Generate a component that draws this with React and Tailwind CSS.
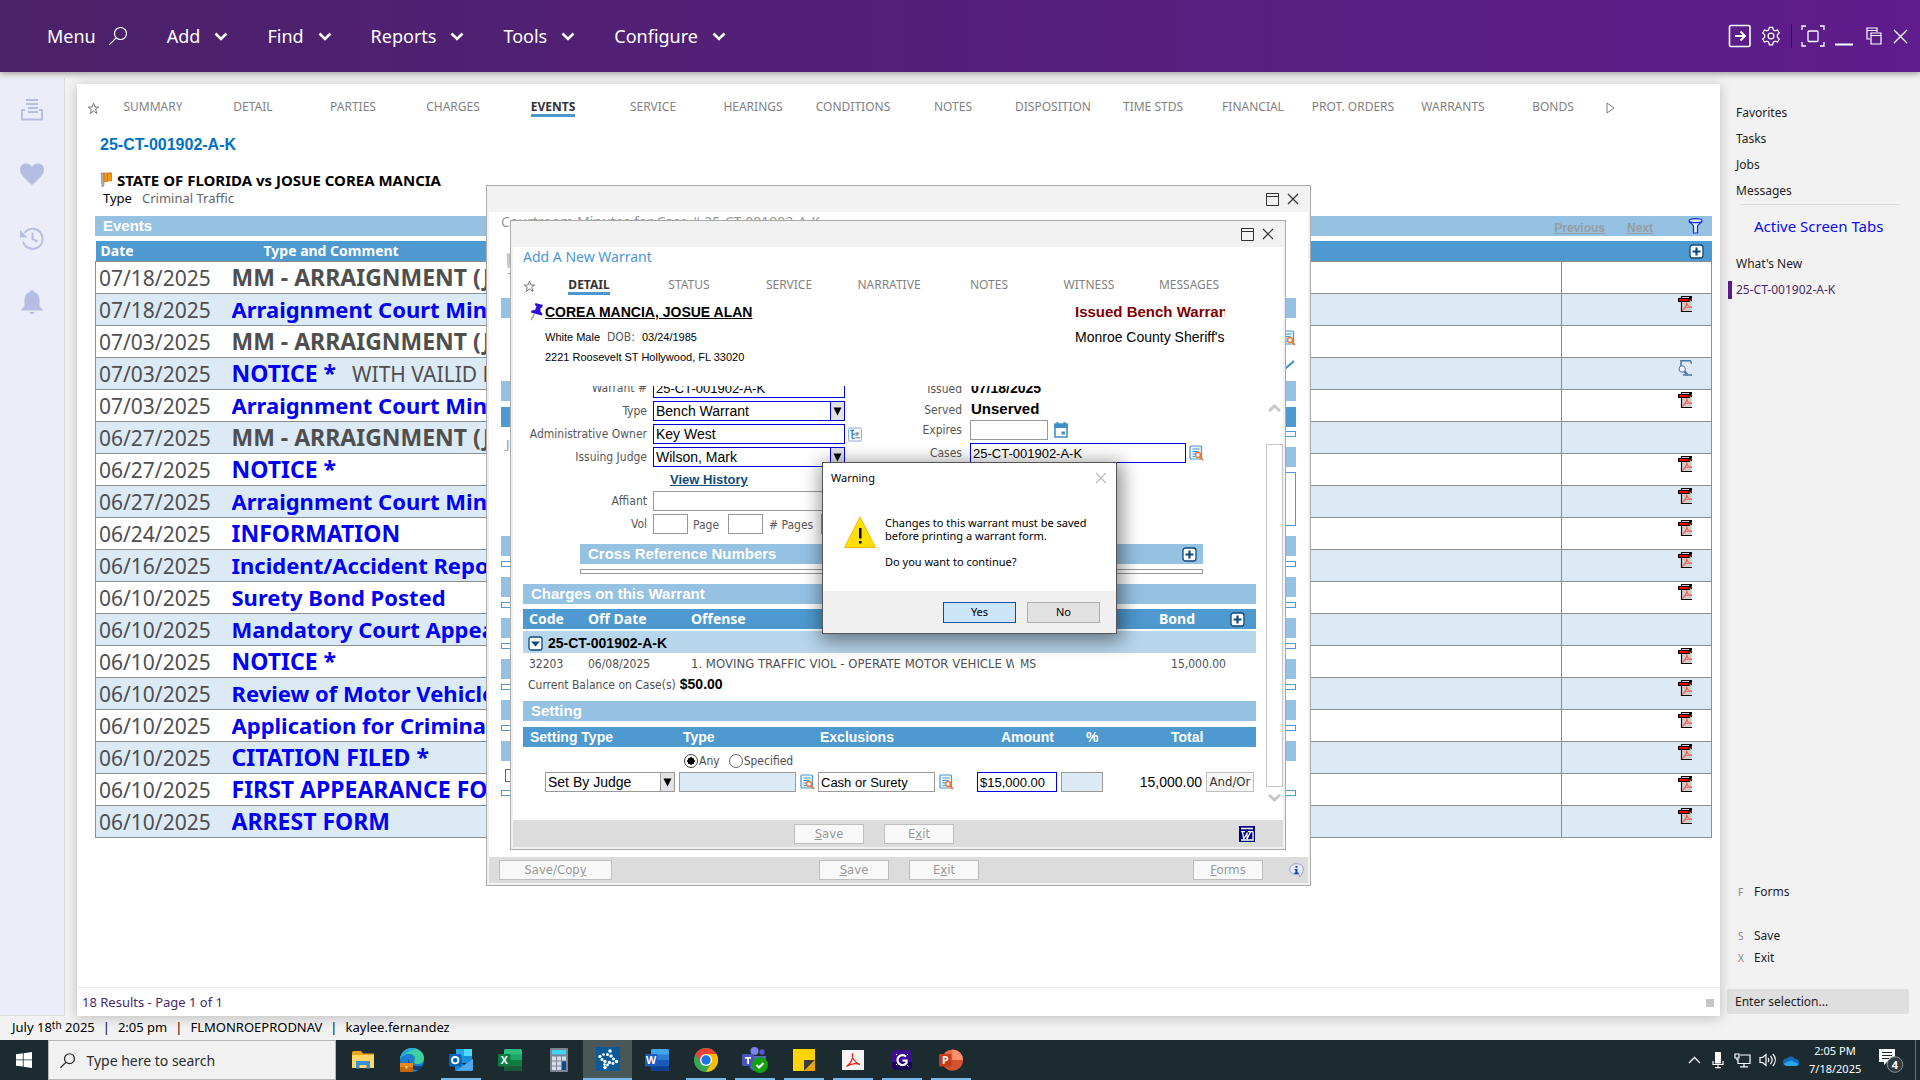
import React from "react";

const arial = "font-['Liberation_Sans',Arial,sans-serif]";
const tahoma = "font-['DejaVu_Sans_Condensed',Tahoma,sans-serif]";

/* ---------- shared icons ---------- */
const Chevron = () => (
  <svg width="14" height="9" viewBox="0 0 14 9" fill="none" stroke="#fff" strokeWidth="2.6">
    <path d="M1.5 1.5 7 7l5.500-5.500" />
  </svg>
);
const Star = ({ size = 13 }) => (
  <svg width={size} height={size} viewBox="0 0 13 13" fill="none" stroke="#777" strokeWidth="1">
    <path d="M6.500 1.200 7.900 5h3.900L8.700 7.400 9.900 11.500 6.500 9 3.100 11.500 4.300 7.400 1.200 5h3.900z" />
  </svg>
);
const Flag = () => (
  <svg width="12" height="16" viewBox="0 0 12 16">
    <path d="M1 1h3v12.500L2 15z" fill="#b5b5b5" stroke="#777" strokeWidth=".6" />
    <path d="M4 1c3 .8 4.500-.6 7.500 0v8c-3-.8-4.500 1.200-7.500.5z" fill="#f39a16" stroke="#b8690a" strokeWidth=".7" />
    <path d="M7.500 1.200v8" stroke="#c97a10" />
  </svg>
);
const PlusIcon = () => (
  <svg width="15" height="15" viewBox="0 0 15 15">
    <rect x="1" y="1" width="13" height="13" rx="2.500" fill="#fff" stroke="#0e4a7a" strokeWidth="1.300" />
    <path d="M7.500 3.500v8M3.500 7.500h8" stroke="#0e4a7a" strokeWidth="2.200" />
  </svg>
);
const LookupIcon = () => (
  <svg width="15" height="16" viewBox="0 0 15 16" fill="none">
    <rect x="1" y="1" width="11.500" height="13" rx="1" fill="#eaf4fb" stroke="#4c97cf" strokeWidth="1.200" />
    <path d="M3.500 4h7M3.500 6.500h6M3.500 9h3M3.500 11.500h3" stroke="#4c97cf" />
    <circle cx="9" cy="10" r="2.400" fill="#fff" stroke="#ee7d3b" strokeWidth="1.500" />
    <path d="m10.800 11.800 3.200 3.200" stroke="#ee7d3b" strokeWidth="1.800" />
  </svg>
);
const PdfIcon = () => (
  <svg width="14" height="16" viewBox="0 0 12 16" preserveAspectRatio="none">
    <path d="M3 .5h9V16H3z" fill="#cfcfcf" />
    <path d="M12 .5H3v15h9" fill="none" stroke="#000" />
    <path d="M9.500.5h2.500v5l-2.500-2z" fill="#000" />
    <path d="M11 2h1v2h-1z" fill="#e00" />
    <rect x=".5" y="2.500" width="9" height="3" fill="#f00" stroke="#000" />
    <path d="M3.500 14.500C6 12 7.500 9 7.500 6.500c0 3 2 4.500 4.500 5M5 12.500c2-1.200 4-1.600 7-1.500" fill="none" stroke="#f4574a" strokeWidth=".9" />
  </svg>
);
const PreviewIcon = () => (
  <svg width="14" height="16" viewBox="0 0 14 16" fill="none">
    <path d="M3 .5h9l2 3V15H3z" fill="#dfe7f3" />
    <path d="M3 7V.8h9.200L14 4M5 15h9" stroke="#4a76ad" strokeWidth="1.500" />
    <circle cx="4.200" cy="9" r="3.200" fill="#eef4fb" stroke="#4a76ad" />
    <path d="m6.300 11.300 3 3.500" stroke="#4a76ad" strokeWidth="2.400" />
  </svg>
);
const MaximizeIcon = () => (
  <svg width="13" height="13" viewBox="0 0 13 13" fill="none" stroke="#333">
    <path d="M.5.5h12v12H.5zM.5 3.500h12" />
  </svg>
);
const CloseIcon = ({ color = "#333" }) => (
  <svg width="12" height="12" viewBox="0 0 12 12" fill="none" stroke={color} strokeWidth="1.200">
    <path d="m1 1 10 10M11 1 1 11" />
  </svg>
);

/* ---------- top bar ---------- */
function TopBar() {
  return (
    <header className="relative z-10 flex h-[72px] shrink-0 items-center bg-linear-to-r from-[#4b2169] to-[#5e1c8c] pr-[12px] pl-[47px] text-white shadow-[0_2px_6px_rgba(0,0,0,0.35)]">
      <nav className="flex items-center gap-[39px] text-[18px]">
        <button className="flex items-center gap-[12px]">
          Menu
          <svg width="20" height="20" viewBox="0 0 20 20" fill="none" stroke="#fff" strokeWidth="1.200">
            <circle cx="12.500" cy="7.500" r="6" />
            <path d="m8.200 11.800-7 7" />
          </svg>
        </button>
        {["Add", "Find", "Reports", "Tools", "Configure"].map((t) => (
          <button key={t} className="flex items-center gap-[14px]">
            {t}
            <Chevron />
          </button>
        ))}
      </nav>
      <div className="ml-auto flex items-center">
        <button aria-label="Go" className="mr-[9px]">
          <svg width="24" height="24" viewBox="0 0 24 24" fill="none" stroke="#fff" strokeWidth="1.600">
            <rect x="1.500" y="1.500" width="20.500" height="21" rx="1.500" />
            <path d="M7 12h9.500M12.500 7.500 17 12l-4.500 4.500" strokeWidth="1.800" />
          </svg>
        </button>
        <button aria-label="Settings" className="mr-[10px]">
          <svg width="20" height="20" viewBox="0 0 24 24" fill="none" stroke="#fff" strokeWidth="1.500">
            <circle cx="12" cy="12" r="3.500" />
            <path d="M10 1.500h4l.7 3 2.200 1.200 3-.9 2 3.500-2.300 2.200v3l2.300 2.200-2 3.500-3-.9-2.200 1.200-.7 3h-4l-.7-3-2.200-1.200-3 .9-2-3.500 2.300-2.200v-3L2.100 8.300l2-3.500 3 .9 2.200-1.200z" />
          </svg>
        </button>
        <span className="mr-[9px] h-[24px] w-px bg-[#33104f]" />
        <button aria-label="Full screen" className="mr-[10px]">
          <svg width="24" height="22" viewBox="0 0 24 22" fill="none" stroke="#fff" strokeWidth="1.300">
            <path d="M5 1H1v4M19 1h4v4M5 21H1v-4M19 21h4v-4" />
            <rect x="7" y="6" width="10" height="10.500" rx="1" />
          </svg>
        </button>
        <button aria-label="Minimize" className="mr-[13px]">
          <svg width="18" height="22" viewBox="0 0 18 22">
            <path d="M0 18.500h18v2H0z" fill="#fff" />
          </svg>
        </button>
        <button aria-label="Restore" className="mr-[11px]">
          <svg width="16" height="18" viewBox="0 0 16 18" fill="none" stroke="#fff" strokeWidth="1.200">
            <path d="M4 12H1V1h10v4M1 3.500h10" />
            <path d="M5 6h10v11H5zM5 8.500h10" />
          </svg>
        </button>
        <button aria-label="Close">
          <svg width="15" height="15" viewBox="0 0 15 15" fill="none" stroke="#fff" strokeWidth="1.300">
            <path d="m1 1 13 13M14 1 1 14" />
          </svg>
        </button>
      </div>
    </header>
  );
}

/* ---------- left rail ---------- */
function SideRail() {
  return (
    <aside className="mt-[6px] flex w-[65px] shrink-0 flex-col items-center gap-[40px] border-r border-b border-[#dcdcdc] bg-[#ebeef8] pt-[20px]">
      <button aria-label="Queue">
        <svg width="24" height="24" viewBox="0 0 24 24" fill="none" stroke="#b6bde4" strokeWidth="2">
          <path d="M6 2h12M6 6h12M8 10h10M8 14h10M5 12H2v9.500h20V12h-3" />
        </svg>
      </button>
      <button aria-label="Favorites">
        <svg width="24" height="24" viewBox="0 0 24 24" fill="#b6bde4">
          <path d="M12 23C6 17.500 0 13 0 7.500 0 4 2.700 1.500 6 1.500c2.500 0 4.800 1.300 6 3.500 1.200-2.200 3.500-3.500 6-3.500 3.300 0 6 2.500 6 6C24 13 18 17.500 12 23z" />
        </svg>
      </button>
      <button aria-label="History">
        <svg width="26" height="24" viewBox="0 0 26 24" fill="none" stroke="#b6bde4" strokeWidth="2">
          <path d="M5.500 7A10 10 0 1 1 4 15.500" />
          <path d="M1 4v7.500h7.500z" fill="#b6bde4" stroke="none" />
          <path d="M13.500 6.500V13l5 2.500" />
        </svg>
      </button>
      <button aria-label="Notifications">
        <svg width="22" height="24" viewBox="0 0 22 24" fill="#b6bde4">
          <path d="M11 0a2 2 0 0 1 2 2c4 1 5.500 4 5.500 8v6.500L22 19.500v1H0v-1l3.500-3V10c0-4 1.500-7 5.500-8a2 2 0 0 1 2-2zM8.500 22h5a2.500 2 0 0 1-5 0z" />
        </svg>
      </button>
    </aside>
  );
}

/* ---------- events page ---------- */
const TABS = ["SUMMARY", "DETAIL", "PARTIES", "CHARGES", "EVENTS", "SERVICE", "HEARINGS", "CONDITIONS", "NOTES", "DISPOSITION", "TIME STDS", "FINANCIAL", "PROT. ORDERS", "WARRANTS", "BONDS"];

function Tabs({ items, active }) {
  return items.map((t) => (
    <span key={t} className="flex w-[100px] justify-center">
      <button
        className={
          t === active
            ? "border-b-[3px] border-[#4c97cf] leading-[14px] font-bold text-[#333]"
            : "border-b-[3px] border-transparent leading-[14px] text-[#828282]"
        }
      >
        {t}
      </button>
    </span>
  ));
}

const EVENTS = [
  ["07/18/2025", "MM - ARRAIGNMENT (J", 0, ""],
  ["07/18/2025", "Arraignment Court Min", 1, "pdf"],
  ["07/03/2025", "MM - ARRAIGNMENT (J", 0, ""],
  ["07/03/2025", "NOTICE *", 1, "view", "WITH VAILID D"],
  ["07/03/2025", "Arraignment Court Min", 1, "pdf"],
  ["06/27/2025", "MM - ARRAIGNMENT (J", 0, ""],
  ["06/27/2025", "NOTICE *", 1, "pdf"],
  ["06/27/2025", "Arraignment Court Min", 1, "pdf"],
  ["06/24/2025", "INFORMATION", 1, "pdf"],
  ["06/16/2025", "Incident/Accident Repo", 1, "pdf"],
  ["06/10/2025", "Surety Bond Posted", 1, "pdf"],
  ["06/10/2025", "Mandatory Court Appea", 1, ""],
  ["06/10/2025", "NOTICE *", 1, "pdf"],
  ["06/10/2025", "Review of Motor Vehicle", 1, "pdf"],
  ["06/10/2025", "Application for Crimina", 1, "pdf"],
  ["06/10/2025", "CITATION FILED *", 1, "pdf"],
  ["06/10/2025", "FIRST APPEARANCE FO", 1, "pdf"],
  ["06/10/2025", "ARREST FORM", 1, "pdf"],
];

function EventsTable() {
  return (
    <table className="mt-[5px] w-full table-fixed border-collapse">
      <colgroup>
        <col className="w-[136px]" />
        <col />
        <col className="w-[150px]" />
      </colgroup>
      <thead>
        <tr className="h-[20px] bg-[#4e99cf] text-left text-[14px] leading-[20px] text-white">
          <th className="p-0 pl-[5px]">Date</th>
          <th className="p-0 pl-[32px]">Type and Comment</th>
          <th className="p-0 pr-[8px]">
            <button aria-label="Add event" className="ml-auto block">
              <PlusIcon />
            </button>
          </th>
        </tr>
      </thead>
      <tbody>
        {EVENTS.map(([date, name, link, icon, note], i) => {
          const size = name === name.toUpperCase() ? "text-[23px]" : "text-[22px]";
          return (
            <tr key={i} className="h-[32px] border border-[#8b8e90] text-[21px] leading-[28px] text-[#4f4f4f] odd:bg-white even:bg-[#dceaf6]">
              <td className="p-0 pl-[3px]">{date}</td>
              <td className="overflow-hidden p-0 whitespace-nowrap">
                {link ? (
                  <a href="#event" className={"font-bold text-[#0000f5] " + size}>{name}</a>
                ) : (
                  <span className={"font-bold " + size}>{name}</span>
                )}
                {note && <span className="ml-4">{note}</span>}
              </td>
              <td className="border-l border-[#8b8e90] p-0 pt-[2px] pr-[19px] align-top">
                {icon && (
                  <button aria-label="Open document" className="ml-auto block">
                    {icon === "pdf" ? <PdfIcon /> : <PreviewIcon />}
                  </button>
                )}
              </td>
            </tr>
          );
        })}
      </tbody>
    </table>
  );
}

/* ---------- window parts ---------- */
function TitleBar() {
  return (
    <div className="flex h-[26px] shrink-0 items-center justify-end gap-2 bg-[#f2f2f2] pr-[9px]">
      <button aria-label="Maximize"><MaximizeIcon /></button>
      <button aria-label="Close window"><CloseIcon /></button>
    </div>
  );
}

function GreyButton({ children, width = "w-[70px]" }) {
  return (
    <button className={"h-[20px] border border-[#bdbdbd] bg-[#f8f8f8] text-[13px] leading-[18px] text-[#999] " + tahoma + " " + width}>
      {children}
    </button>
  );
}

function SectionBar({ children, right }) {
  return (
    <div className={"flex h-[20px] items-center bg-[#95c1e3] pr-[6px] pl-2 text-[15px] leading-[20px] font-bold text-white " + arial}>
      <h2>{children}</h2>
      {right}
    </div>
  );
}

const label = "w-[124px] shrink-0 text-right text-[12px] leading-[21px] whitespace-nowrap text-[#585858]";
const blueBox = "block h-[20px] min-w-0 rounded-none border border-[#0000e0] bg-white px-[2px] leading-[18px] text-black " + arial;
const greyBox = "block h-[20px] min-w-0 rounded-none border border-[#999] bg-white px-[2px] leading-[18px] text-black " + arial;

function Dropdown({ id, name, value, box, width, arrow }) {
  return (
    <div className={"relative h-[20px] " + width}>
      <select id={id} aria-label={name} className={"w-full appearance-none text-[14px] " + box}>
        <option>{value}</option>
      </select>
      <span className={"pointer-events-none absolute inset-y-0 right-0 flex w-[15px] items-center justify-center border bg-[#e2e3e6] " + arrow}>
        <svg width="9" height="9" viewBox="0 0 9 9"><path d="M.5.500h8L4.500 8.500z" /></svg>
      </span>
    </div>
  );
}

function WarrantForm() {
  return (
    <div className="flex text-[12px] text-[#585858]">
      <div className="w-[322px] shrink-0">
        <div className="flex h-[23px] gap-[6px]">
          <label htmlFor="wn" className={label}>Warrant #</label>
          <input id="wn" defaultValue="25-CT-001902-A-K" className={"flex-1 text-[13px] " + blueBox} />
        </div>
        <div className="flex h-[23px] gap-[6px]">
          <label htmlFor="wt" className={label}>Type</label>
          <Dropdown id="wt" value="Bench Warrant" box={blueBox} width="flex-1" arrow="border-[#0000e0]" />
        </div>
        <div className="flex h-[23px] gap-[6px]">
          <label htmlFor="ao" className={label}>Administrative Owner</label>
          <input id="ao" defaultValue="Key West" className={"flex-1 text-[14px] " + blueBox} />
        </div>
        <div className="flex h-[23px] gap-[6px]">
          <label htmlFor="ij" className={label}>Issuing Judge</label>
          <Dropdown id="ij" value="Wilson, Mark" box={blueBox} width="flex-1" arrow="border-[#0000e0]" />
        </div>
        <a href="#history" className={"ml-[147px] block h-[21px] text-[13px] leading-[19px] font-bold text-[#124a77] underline " + arial}>View History</a>
        <div className="flex h-[23px] gap-[6px]">
          <label htmlFor="af" className={label}>Affiant</label>
          <input id="af" className={"flex-1 text-[14px] " + greyBox} />
        </div>
        <div className="flex h-[20px] leading-[22px]">
          <label htmlFor="vol" className={label}>Vol</label>
          <input id="vol" className={"ml-[6px] w-[35px] " + greyBox} />
          <label htmlFor="pg" className="mx-[5px] w-[30px]">Page</label>
          <input id="pg" className={"w-[35px] " + greyBox} />
          <label htmlFor="pgs" className="mx-[6px] w-[46px] shrink-0 whitespace-nowrap"># Pages</label>
          <input id="pgs" className={"w-[24px] shrink-0 " + greyBox} />
        </div>
      </div>
      <button aria-label="Browse owners" className="mt-[49px] ml-[3px] h-[15px] self-start">
        <svg width="14" height="15" viewBox="0 0 15 15" fill="none">
          <rect x=".5" y=".5" width="14" height="14" rx="1.500" fill="#f4f7fb" stroke="#8ca6cf" />
          <path d="M2.500 3h4M4.500 3v8.500h3M4.500 7h3" stroke="#1d7fd6" strokeWidth="1.300" />
          <path d="M8 6h4M8 8h3M8 11h5" stroke="#777" strokeWidth="1.300" />
        </svg>
      </button>
      <div className="ml-[24px]">
        <div className="flex h-[21px] items-center gap-[9px]">
          <span className="w-[76px] text-right">Issued</span>
          <b className={"text-[14px] text-black " + arial}>07/18/2025</b>
        </div>
        <div className="flex h-[21px] items-center gap-[9px]">
          <span className="w-[76px] text-right">Served</span>
          <b className={"text-[15px] text-black " + arial}>Unserved</b>
        </div>
        <div className="flex h-[23px] gap-2 leading-[21px]">
          <label htmlFor="ex" className="w-[76px] text-right">Expires</label>
          <input id="ex" className={"w-[78px] " + greyBox} />
          <button aria-label="Pick date" className="-ml-[2px] h-[20px]">
            <svg width="14" height="16" viewBox="0 0 14 16">
              <path d="M1 2h12v13H1z" fill="#fff" stroke="#4190c9" strokeWidth="1.600" />
              <path d="M0 2h14v4H0zM2.500 0h2v3h-2zM9.500 0h2v3h-2zM7.500 9.500h3.500v3H7.500z" fill="#4190c9" />
            </svg>
          </button>
        </div>
        <div className="flex h-[23px] gap-2 leading-[21px]">
          <label htmlFor="cs" className="w-[76px] text-right">Cases</label>
          <input id="cs" defaultValue="25-CT-001902-A-K" className={"w-[216px] text-[13px] " + blueBox} />
          <button aria-label="Look up case" className="-ml-[5px] h-[20px]"><LookupIcon /></button>
        </div>
      </div>
    </div>
  );
}

function ChargesTable() {
  return (
    <table className="mt-[5px] w-full table-fixed border-collapse text-[12px] text-[#4f4f4f]">
      <colgroup>
        <col className="w-[65px]" />
        <col className="w-[103px]" />
        <col className="w-[323px]" />
        <col className="w-[54px]" />
        <col />
        <col className="w-[30px]" />
      </colgroup>
      <thead>
        <tr className="h-[20px] bg-[#4e99cf] text-left font-['Noto_Sans',sans-serif] text-[14px] leading-[20px] text-white">
          <th className="p-0 pl-[6px]">Code</th>
          <th className="p-0">Off Date</th>
          <th className="p-0">Offense</th>
          <th className="p-0" />
          <th className="p-0 pr-[31px] text-right">Bond</th>
          <th className="p-0 pl-[4px]">
            <button aria-label="Add charge" className="block"><PlusIcon /></button>
          </th>
        </tr>
      </thead>
      <tbody>
        <tr>
          <td colSpan={6} className="h-[23px] border-t-2 border-white bg-[#b7d5eb] p-0">
            <div className={"flex items-center gap-[5px] pt-[2px] pl-[5px] text-[14px] leading-[19px] font-bold text-black " + arial}>
              <button aria-label="Collapse">
                <svg width="15" height="15" viewBox="0 0 15 15">
                  <rect x="1" y="1" width="13" height="13" rx="2" fill="#fff" stroke="#0e4a7a" strokeWidth="1.300" />
                  <path d="M3 5.500h9L7.500 10.500z" fill="#0e4a7a" />
                </svg>
              </button>
              25-CT-001902-A-K
            </div>
          </td>
        </tr>
        <tr className="h-[22px]">
          <td className="p-0 pl-[6px]">32203</td>
          <td className="p-0">06/08/2025</td>
          <td className="overflow-hidden p-0 text-[13px] leading-[20px] whitespace-nowrap">1. MOVING TRAFFIC VIOL - OPERATE MOTOR VEHICLE W</td>
          <td className="p-0 pl-[6px]">MS</td>
          <td className="p-0 text-right">15,000.00</td>
          <td className="p-0" />
        </tr>
      </tbody>
    </table>
  );
}

function Setting() {
  return (
    <>
      <div className={"mt-[6px] flex h-[20px] items-center bg-[#4e99cf] pl-[7px] text-[14px] leading-[18px] font-bold text-white " + arial}>
        <span className="w-[153px]">Setting Type</span>
        <span className="w-[137px]">Type</span>
        <span className="w-[181px]">Exclusions</span>
        <span className="w-[85px]">Amount</span>
        <span className="w-[85px]">%</span>
        <span>Total</span>
      </div>
      <div className="mt-1 flex h-[19px] items-center pl-[161px] text-[12px] leading-[16px] text-[#4f4f4f]">
        <label className="flex items-center gap-px">
          <input type="radio" name="bond" defaultChecked className="size-[14px] appearance-none rounded-full border border-[#444] bg-white bg-radial from-black from-40% to-white to-45%" />
          Any
        </label>
        <label className="ml-[9px] flex items-center gap-px">
          <input type="radio" name="bond" className="size-[14px] appearance-none rounded-full border border-[#666] bg-white" />
          Specified
        </label>
      </div>
      <div className="mt-[2px] flex h-[20px] pl-[22px]">
        <Dropdown id="sj" name="Setting type" value="Set By Judge" box={greyBox} width="w-[130px]" arrow="border-[#999]" />
        <input aria-label="Bond type" className="ml-1 w-[117px] border border-[#999] bg-[#dceaf6]" />
        <button aria-label="Look up type" className="ml-1"><LookupIcon /></button>
        <input aria-label="Exclusions" defaultValue="Cash or Surety" className={"ml-[3px] w-[117px] text-[13px] " + greyBox} />
        <button aria-label="Look up exclusions" className="ml-1"><LookupIcon /></button>
        <input aria-label="Amount" defaultValue="$15,000.00" className={"ml-[23px] w-[80px] text-[13px] " + blueBox} />
        <input aria-label="Percent" className="ml-1 w-[42px] border border-[#999] bg-[#dceaf6]" />
        <span className={"w-[99px] text-right text-[14px] leading-[20px] text-black " + arial}>15,000.00</span>
        <button className="ml-1 h-[20px] w-[48px] border border-[#bdbdbd] bg-[#f8f8f8] text-[13px] leading-[18px] text-[#333]">And/Or</button>
      </div>
    </>
  );
}

const ScrollArrow = ({ d }) => (
  <svg width="13" height="9" viewBox="0 0 13 9" fill="none" stroke="#c8c8c8" strokeWidth="3"><path d={d} /></svg>
);

function WarrantWindow() {
  return (
    <section className="absolute top-[34px] right-[24px] bottom-[35px] left-[23px] flex flex-col border border-[#a9a9a9] bg-[#f2f2f2] px-[2px] pb-[2px]">
      <TitleBar />
      <div className="flex min-h-0 flex-1 flex-col bg-white">
        <h1 className="h-[27px] pl-[10px] text-[14px] leading-[19px] text-[#4b97d3]">Add A New Warrant</h1>
        <div className="flex h-[24px] items-center text-[12px]">
          <span className="w-[26px] pl-[10px]"><Star /></span>
          <Tabs items={["DETAIL", "STATUS", "SERVICE", "NARRATIVE", "NOTES", "WITNESS", "MESSAGES"]} active="DETAIL" />
        </div>
        <div className={"flex h-[88px] justify-between pt-[5px] pr-[58px] pl-[17px] text-black " + arial}>
          <div className="flex gap-px">
            <svg width="14" height="18" viewBox="0 0 14 18">
              <path d="m4.500 11-3.500 6" stroke="#aaa" strokeWidth="1.500" />
              <path d="m5.500 0 7.500 2-1 2.500-1.500.5v3.500l2 2.500-1 1.500L1 9.500l.5-2L5 7l1.500-3.500L5 2z" fill="#2a10d8" />
            </svg>
            <div>
              <a href="#party" className="block text-[14px] leading-[18px] font-bold underline">COREA MANCIA, JOSUE ALAN</a>
              <p className="mt-[6px] flex h-[20px] items-center text-[11px]">
                White Male
                <span className={"mx-[7px] text-[12px] text-[#555] " + tahoma}>DOB:</span>
                03/24/1985
              </p>
              <p className="text-[11px] leading-[20px]">2221 Roosevelt ST Hollywood, FL 33020</p>
            </div>
          </div>
          <div className="w-[150px] overflow-hidden whitespace-nowrap">
            <p className="text-[15px] leading-[18px] font-bold text-[#800000]">Issued Bench Warran</p>
            <p className="mt-[6px] text-[14px] leading-[20px]">Monroe County Sheriff's</p>
          </div>
        </div>
        <div className={"flex min-h-0 flex-1 " + tahoma}>
          <div className="flex-1 overflow-hidden pr-[10px] pl-[10px]">
            <div className="-mt-[8px]">
              <WarrantForm />
              <div className="mt-[10px] mr-[53px] ml-[57px]">
                <SectionBar right={<button aria-label="Add cross reference" className="ml-auto"><PlusIcon /></button>}>Cross Reference Numbers</SectionBar>
                <div className="mt-[5px] h-[5px] border border-[#999]" />
              </div>
              <div className="mt-[10px]">
                <SectionBar>Charges on this Warrant</SectionBar>
                <ChargesTable />
              </div>
              <p className="flex h-[19px] items-center gap-1 pl-[5px] text-[12px] text-[#4f4f4f]">
                Current Balance on Case(s)
                <b className={"text-[14px] text-black " + arial}>$50.00</b>
              </p>
              <div className="mt-[7px]">
                <SectionBar>Setting</SectionBar>
              </div>
              <Setting />
            </div>
          </div>
          <div className="flex w-[17px] flex-col items-center pt-[17px] pb-[17px]">
            <ScrollArrow d="M1 8l5.500-5L12 8" />
            <span className="mt-[32px] mb-[7px] w-full flex-1 border border-[#c8c8c8]" />
            <ScrollArrow d="M1 1l5.500 5L12 1" />
          </div>
        </div>
      </div>
      <footer className="flex h-[27px] shrink-0 items-center bg-[#dcdcdc] pr-[28px] pl-[281px]">
        <GreyButton><u>S</u>ave</GreyButton>
        <span className="w-5" />
        <GreyButton>E<u>x</u>it</GreyButton>
        <button aria-label="Word document" className="ml-auto">
          <svg width="16" height="16" viewBox="0 0 16 16" fill="none">
            <path d="M0 0h16v16H0z" fill="#00007a" />
            <path d="M2 2.500h12" stroke="#fff" strokeWidth="1.600" />
            <path d="M2 5.700h4M9 5.700h5M3.500 6l1.200 7L8 7.500v5.500L11.500 6M14 5.500V14H2" stroke="#fff" strokeWidth="1.300" />
          </svg>
        </button>
      </footer>
    </section>
  );
}

function WarningDialog() {
  return (
    <section role="alertdialog" aria-labelledby="wtitle" className="absolute top-[276px] left-[335px] flex h-[172px] w-[295px] flex-col border border-[#555] bg-white text-[11px] text-black shadow-[2px_4px_18px_3px_rgba(0,0,0,0.45)]">
      <div className="flex h-[30px] items-center justify-between pr-[9px] pl-2">
        <h2 id="wtitle">Warning</h2>
        <button aria-label="Dismiss"><CloseIcon color="#bbb" /></button>
      </div>
      <div className="flex flex-1 pt-[23px] pl-[21px]">
        <svg width="32" height="32" viewBox="0 0 32 32">
          <path d="M16 1 31.500 31.500H.5z" fill="#ffe000" stroke="#f9b50d" strokeWidth="1" />
          <path d="M15 12h2.500v10.500H15zM15 25h2.500v2.500H15z" fill="#000" />
        </svg>
        <div className="ml-[9px] leading-[13px]">
          <p>Changes to this warrant must be saved<br />before printing a warrant form.</p>
          <p className="mt-[13px]">Do you want to continue?</p>
        </div>
      </div>
      <div className="flex h-[42px] items-center justify-end gap-[11px] bg-[#f0f0f0] pr-4">
        <button className="h-[21px] w-[73px] border border-[#005499] bg-[#cce4f7]">Yes</button>
        <button className="h-[21px] w-[73px] border border-[#adadad] bg-[#e1e1e1]">No</button>
      </div>
    </section>
  );
}

/* Collapsed panels of the court minutes window */
const panel = "h-[20px] bg-[#95c1e3]";
const emptyList = "mt-[5px] mb-[10px] h-[6px] border border-[#4e99cf]";

function MinutesWindow() {
  return (
    <section className="relative flex h-[701px] w-[825px] flex-col border border-[#a9a9a9] bg-[#f2f2f2] px-[2px] pb-[2px]">
      <TitleBar />
      <div className="flex flex-1 flex-col bg-white px-[12px] text-[#999]">
        <h1 className="h-[41px] text-[14px] leading-[19px]">Courtroom Minutes for Case # 25-CT-001902-A-K</h1>
        <div className="ml-[5px] opacity-60 grayscale"><Flag /></div>
        <p className="h-[29px] pl-[7px] text-[12px] leading-[18px]">T</p>
        <div className={panel} />
        <div className="flex h-[63px] flex-col items-end pt-[12px]">
          <LookupIcon />
          <svg className="mt-[14px]" width="16" height="10" viewBox="0 0 16 10" fill="none" stroke="#4190c9" strokeWidth="2"><path d="m2 3 4 5 8-7" /></svg>
        </div>
        <div className={panel} />
        <div className="mt-[6px] h-[20px] bg-[#4e99cf]" />
        <div className="flex h-[109px] justify-between">
          <p className="pt-[8px] pl-[5px] text-[13px]">J</p>
          <div className="w-[120px]">
            <div className="mt-1 h-[6px] border border-[#4e99cf]" />
            <div className="mt-[10px] h-[20px] bg-[#95c1e3]" />
            <div className="mt-[5px] h-[54px] border border-[#4e99cf]" />
          </div>
        </div>
        {[0, 1, 2, 3, 4].map((i) => (
          <React.Fragment key={i}>
            <div className={panel} />
            <div className={emptyList} />
          </React.Fragment>
        ))}
        <div className={panel} />
        <input type="checkbox" aria-label="Sealed" className="mt-2 ml-1 size-[13px] appearance-none border border-[#666] bg-white" />
        <div className="mt-2 h-[6px] border border-[#4e99cf]" />
      </div>
      <footer className="flex h-[26px] shrink-0 items-center bg-[#dcdcdc] pr-[4px] pl-[10px]">
        <GreyButton width="w-[113px]">Save/Cop<u>y</u></GreyButton>
        <span className="w-[207px]" />
        <GreyButton><u>S</u>ave</GreyButton>
        <span className="w-5" />
        <GreyButton>E<u>x</u>it</GreyButton>
        <span className="flex-1" />
        <GreyButton><u>F</u>orms</GreyButton>
        <button aria-label="Information" className="ml-[26px]">
          <svg width="15" height="15" viewBox="0 0 15 15">
            <path d="M7.500.7c3.800 0 6.800 2.300 6.800 5.500 0 3-1.500 5.800-3.800 8 .3-1 .3-2 0-2.800-5 1-9.800-1-9.800-5.200C.7 3 3.700.7 7.500.7z" fill="#e9e9fb" stroke="#9d9bc9" />
            <path d="M6.500 3h2v1.700h-2zM5.500 6h3v3.500h1.200V11H5.300V9.500h1.200V7.300h-1z" fill="#1546b5" />
          </svg>
        </button>
      </footer>
      <WarrantWindow />
      <WarningDialog />
    </section>
  );
}

function EventsPage() {
  return (
    <main className="relative mt-3 ml-3 flex flex-1 flex-col bg-white shadow-[0_2px_12px_rgba(0,0,0,0.22)]">
      <div className="flex h-[48px] items-center pl-[10px] text-[12px]">
        <span className="w-[16px]"><Star /></span>
        <Tabs items={TABS} active="EVENTS" />
        <svg className="ml-[3px]" width="9" height="12" viewBox="0 0 9 12" fill="none" stroke="#777"><path d="M1 1v10l7-5z" /></svg>
      </div>
      <div className="mr-2 ml-[18px] flex flex-1 flex-col">
        <p className={"mt-[4px] h-[34px] pl-[5px] text-[16px] leading-[18px] font-bold text-[#0072c6] " + arial}>25-CT-001902-A-K</p>
        <p className="flex h-[19px] items-center gap-[5px] pl-[5px] text-[15px] leading-[18px] font-bold text-black">
          <Flag />
          STATE OF FLORIDA vs JOSUE COREA MANCIA
        </p>
        <p className="h-[27px] pl-[8px] text-[13px] leading-[18px] text-[#666]">
          <span className="mr-[10px] text-black">Type</span>Criminal Traffic
        </p>
        <SectionBar
          right={
            <div className="ml-auto flex items-center text-[12px] text-[#969da3] [text-shadow:1px_1px_0_#fff]">
              <button className="mr-[22px] pt-[3px] underline">Previous</button>
              <button className="mr-[35px] pt-[3px] underline">Next</button>
              <button aria-label="Filter" className="mr-[3px]">
                <svg width="15" height="16" viewBox="0 0 15 16" fill="#dff0fb" stroke="#1330d8" strokeWidth="1.200">
                  <path d="M1 3.500C3 5.500 5.500 6.500 5.500 8.500v6.500h4V8.500c0-2 2.500-3 4.500-5" />
                  <ellipse cx="7.500" cy="2.700" rx="6.500" ry="2" />
                </svg>
              </button>
            </div>
          }
        >
          Events
        </SectionBar>
        <EventsTable />
      </div>
      <div className="flex h-[29px] items-center justify-between border-t border-[#ececec] pt-px pr-[6px] pl-[5px] text-[13px] text-[#4b2a6b]">
        18 Results - Page 1 of 1
        <span className="size-2 bg-[#c6c6c6]" />
      </div>
      <div className="absolute inset-x-0 top-[101px] flex justify-center">
        <MinutesWindow />
      </div>
    </main>
  );
}

function RightPanel() {
  const link = "block h-[26px] text-left leading-[26px]";
  return (
    <aside className="flex w-[200px] shrink-0 flex-col pt-[28px] pr-[11px] pb-[2px] pl-[7px] text-[12px] text-[#1c1c1c]">
      <nav className="pl-[9px]">
        {["Favorites", "Tasks", "Jobs", "Messages"].map((t) => (
          <a key={t} href="#nav" className={link}>{t}</a>
        ))}
      </nav>
      <hr className="mr-[9px] ml-[13px] border-[#dadada]" />
      <h2 className="mt-[9px] h-[24px] pl-[27px] text-[15px] leading-[24px] text-[#0a0af0]">Active Screen Tabs</h2>
      <div className="mt-[13px]">
        <a href="#new" className={link + " pl-[9px]"}>What's New</a>
        <a href="#case" className="flex h-[26px] items-center gap-1 pl-px text-[#4b2a6b]">
          <span className="h-[18px] w-1 bg-[#5c1a8b]" />
          25-CT-001902-A-K
        </a>
      </div>
      <div className="mt-auto pl-[11px]">
        {[["F", "Forms", "mb-[22px]"], ["S", "Save", ""], ["X", "Exit", "mb-[20px]"]].map(([k, t, m]) => (
          <button key={k} className={"flex h-[22px] items-center " + m}>
            <span className="w-4 text-left text-[10px] text-[#888]">{k}</span>
            {t}
          </button>
        ))}
      </div>
      <input aria-label="Selection" placeholder="Enter selection..." className="h-[25px] w-full rounded-[3px] bg-[#dfdfdf] px-2 text-[12px] text-black placeholder:text-[#1c1c1c]" />
    </aside>
  );
}

/* ---------- taskbar ---------- */
const OfficeDoc = ({ c, dark, letter, bands }) => (
  <svg width="24" height="24" viewBox="0 0 24 24">
    <rect x="6" y="1" width="18" height="22" rx="1.500" fill={bands[0]} />
    <path d="M6 6.500h18v5.500H6z" fill={bands[1]} />
    <path d="M6 12h18v5.500H6z" fill={bands[2]} />
    <path d="M6 17.500h18v4a1.500 1.500 0 0 1-1.500 1.500H7.500A1.500 1.500 0 0 1 6 21.500z" fill={dark} />
    <rect x="0" y="6" width="12.500" height="12.500" rx="1" fill={c} />
    <text x="6.200" y="16" textAnchor="middle" fontSize="10.500" fontWeight="bold" fill="#fff" fontFamily="Open Sans">{letter}</text>
  </svg>
);

const APPS = [
  ["File Explorer", "", <svg width="22" height="18" viewBox="0 0 22 18"><path d="M0 1.500A1.500 1.500 0 0 1 1.500 0H9l2 2.500h11V17H0z" fill="#e8a713" /><path d="M0 4h22v13H0z" fill="#ffd766" /><path d="M4 17.500V10h14v7.500h-3.500V14h-7v3.500z" fill="#3c8fd9" /></svg>],
  ["Edge", "", <svg width="24" height="24" viewBox="0 0 24 24"><circle cx="12" cy="12" r="12" fill="#1b7fd1" /><path d="M0 11C1 4 6 0 12 0c7 0 12 4.500 12 10 0 4-3 6-6.500 6-2.500 0-3.500-1-3.500-2s1-1.500 1-3.500C15 8 12.500 6 9 6c-4 0-7.500 2-9 5z" fill="#3fd0a0" /><path d="M0 11C1 4 6 0 12 0c2 0 4 .5 5.500 1.200C14 1 8 3 5 7 3 7.500 1 9 0 11z" fill="#2ba5dc" /><path d="M8.500 11c-1.500 6 3 11 9.500 11.500A12 12 0 0 0 23 17c-5 3-13 1-14.500-6z" fill="#123a78" /><rect x="0" y="15" width="13" height="9" rx="1" fill="#c5690c" /><path d="M0 15h13v4H0z" fill="#e58a1f" /><path d="M5.500 18h2v2.500h-2z" fill="#ffd766" /></svg>],
  ["Outlook", "on", <svg width="24" height="24" viewBox="0 0 24 24"><rect x="7" y="1" width="16" height="14" rx="1" fill="#1490df" /><path d="M15 1h8v7h-8z" fill="#50d9ff" /><path d="M7 1h8v7H7z" fill="#28a8ea" /><path d="M6 11l9 6 9-6v10.500a1.500 1.500 0 0 1-1.500 1.500h-15A1.500 1.500 0 0 1 6 21.500z" fill="#1a86d9" /><path d="m24 11-17 11.800h15.500A1.500 1.500 0 0 0 24 21.500z" fill="#50a9f0" /><rect x="0" y="6" width="12.500" height="12.500" rx="1" fill="#0364b8" /><circle cx="6.200" cy="12.200" r="3.200" fill="none" stroke="#fff" strokeWidth="1.800" /></svg>],
  ["Excel", "", <OfficeDoc c="#107c41" dark="#185c37" letter="X" bands={["#2fbd7c", "#21a366", "#107c41"]} />],
  ["Calculator", "", <svg width="18" height="24" viewBox="0 0 18 24"><rect width="18" height="24" rx="1" fill="#7b8490" /><path d="M2 2h14v4.500H2z" fill="#41d3f5" /><path d="M2 8.500h4v4H2zM7 8.500h4v4H7zM12 8.500h4v4h-4zM2 13.500h4v4H2zM7 13.500h4v4H7zM2 18.500h4v3.500H2zM7 18.500h4v3.500H7z" fill="#d5dde5" /><path d="M12 13.500h4V22h-4z" fill="#0f4b8c" /></svg>],
  ["Case system", "active", <svg width="24" height="24" viewBox="0 0 24 24"><path d="M0 0h24v24H0z" fill="#0a5a96" /><g fill="#fff"><circle cx="14" cy="4" r="1.700" /><circle cx="11.500" cy="7.500" r="1.500" /><circle cx="15" cy="9" r="1.700" /><circle cx="7.500" cy="7.500" r="1.300" /><circle cx="4" cy="9.500" r="1.700" /><circle cx="6" cy="12.500" r="1.500" /><circle cx="9" cy="14.500" r="1.700" /><circle cx="20.500" cy="14.500" r="1.700" /><circle cx="17.500" cy="12" r="1.500" /><circle cx="17" cy="16.500" r="1.400" /><circle cx="13.500" cy="15.500" r="1.700" /><circle cx="11.500" cy="18" r="1.400" /><circle cx="9" cy="20.500" r="1.700" /><circle cx="8.500" cy="17.500" r="1.300" /></g></svg>],
  ["Word", "", <OfficeDoc c="#185abd" dark="#103f91" letter="W" bands={["#41a5ee", "#2b7cd3", "#185abd"]} />],
  ["Chrome", "on", <svg width="24" height="24" viewBox="0 0 24 24"><circle cx="12" cy="12" r="12" fill="#34a853" /><path d="M12 0a12 12 0 0 1 10.400 6H12L6.800 15 1.600 6A12 12 0 0 1 12 0z" fill="#ea4335" /><path d="M22.400 6A12 12 0 0 1 12 24l5.200-9L12 6z" fill="#fbbc04" /><circle cx="12" cy="12" r="6" fill="#fff" /><circle cx="12" cy="12" r="4.700" fill="#1a73e8" /></svg>],
  ["Teams", "on", <svg width="26" height="26" viewBox="0 0 26 26"><circle cx="12.500" cy="4" r="4" fill="#7b83eb" /><circle cx="20" cy="5" r="2.700" fill="#5059c9" /><path d="M8 9h11v10a6 6 0 0 1-11 2zM19 9h5v8h-5z" fill="#5b63d0" /><rect y="7" width="12" height="12" rx="1" fill="#4b53bc" /><path d="M3 10h6v1.700H7V17H5.200v-5.300H3z" fill="#fff" /><circle cx="18" cy="18" r="8" fill="#13a10e" /><path d="m14.500 18 2.500 2.500 4.500-4.500" fill="none" stroke="#fff" strokeWidth="2" /></svg>],
  ["Sticky Notes", "on", <svg width="22" height="22" viewBox="0 0 22 22"><path d="M0 0h22v22H0z" fill="#ffd500" /><path d="M22 11H11v11z" fill="#3b3b3b" /><path d="M22 11v11H11z" fill="#e6a800" /></svg>],
  ["Acrobat", "on", <svg width="22" height="20" viewBox="0 0 22 20"><path d="M0 0h22v20H0z" fill="#f4f4f4" /><path d="M4.500 16.500C9 13.500 11.500 8 10.500 3.500c-1 4 2 9 7.500 11-4-1.500-9-1-13.500 2z" fill="none" stroke="#e1251b" strokeWidth="1.300" /></svg>],
  ["G app", "on", <svg width="20" height="20" viewBox="0 0 20 20"><rect width="20" height="20" rx="4" fill="#3b0f8f" /><path d="M0 12h20v4a4 4 0 0 1-4 4H4a4 4 0 0 1-4-4z" fill="#1d0557" /><path d="M14 6.500A5 5 0 1 0 14.500 13V10.500H10.500" fill="none" stroke="#fff" strokeWidth="2.200" /><path d="m4 4 1 1M16 4l-1 1M4 15l1-1M15 15l1.500 1.500" stroke="#fff" /></svg>],
  ["PowerPoint", "on", <svg width="24" height="24" viewBox="0 0 24 24"><circle cx="13.500" cy="12" r="10.500" fill="#ed6c47" /><path d="M13.500 1.500A10.500 10.500 0 0 1 24 12H13.500z" fill="#ff8f6b" /><path d="M24 12a10.500 10.500 0 0 1-19 6L13.500 12z" fill="#d35230" /><rect y="6" width="12.500" height="12.500" rx="1" fill="#c43e1c" /><text x="6.300" y="16" textAnchor="middle" fontSize="10.500" fontWeight="bold" fill="#fff" fontFamily="Open Sans">P</text></svg>],
];

function Taskbar() {
  return (
    <footer className="flex h-[40px] shrink-0 bg-[#1b2b30] text-white">
      <button aria-label="Start" className="flex w-[48px] items-center justify-center">
        <svg width="16" height="16" viewBox="0 0 16 16" fill="#fff">
          <path d="M0 2.200 6.800 1.300V7.500H0zM7.600 1.200 16 0v7.500H7.600zM0 8.300h6.800v6.300L0 13.800zM7.600 8.300H16V16l-8.400-1.200z" />
        </svg>
      </button>
      <label className="flex w-[288px] items-center gap-[11px] border border-[#b5b5b5] bg-[#f1f1f1] pl-[11px]">
        <svg width="17" height="17" viewBox="0 0 17 17" fill="none" stroke="#222" strokeWidth="1.300">
          <circle cx="10.500" cy="6.500" r="5.500" />
          <path d="M6.500 10.500.5 16.500" />
        </svg>
        <input placeholder="Type here to search" className="w-full bg-transparent text-[14px] text-black placeholder:text-[#2c2c2c]" />
      </label>
      <nav className="ml-[2px] flex">
        {APPS.map(([name, state, icon]) => (
          <button
            key={name}
            aria-label={name}
            className={
              state === "active"
                ? "flex w-[49px] items-center justify-center border-b-2 border-[#76b9ed] bg-[#4a5759]"
                : "flex w-[49px] justify-center"
            }
          >
            {state === "active" ? (
              icon
            ) : (
              <span className={"flex h-full w-[40px] items-center justify-center border-y-2 border-t-transparent " + (state === "on" ? "border-b-[#76b9ed]" : "border-b-transparent")}>{icon}</span>
            )}
          </button>
        ))}
      </nav>
      <div className="ml-auto flex items-center">
        <svg className="mr-[11px]" width="13" height="8" viewBox="0 0 13 8" fill="none" stroke="#fff" strokeWidth="1.300"><path d="m1 7 5.500-5.500L12 7" /></svg>
        <svg className="mr-[10px]" width="12" height="17" viewBox="0 0 12 17" fill="#fff"><rect x="3" width="6" height="11.500" rx=".5" /><path d="M1 9v3.500h10V9" fill="none" stroke="#fff" strokeWidth="1.200" /><path d="M5.500 12h1v3h2.500v1.200H3V15h2.500z" /></svg>
        <svg className="mr-[8px]" width="17" height="15" viewBox="0 0 17 15" fill="none" stroke="#fff" strokeWidth="1.200"><path d="M6 2h10v8.500H4V6M10 10.500v3M6 13.800h8" /><path d="M1 1h4v4H1zM3 5v2.500" /></svg>
        <svg className="mr-[7px]" width="17" height="14" viewBox="0 0 17 14" fill="none" stroke="#fff" strokeWidth="1.200"><path d="M1 4.500h2.500L7 1.500v11L3.500 9.500H1zM9 5c1 1.200 1 2.800 0 4M11.500 3c2 2.400 2 5.600 0 8M14 1c3 3.600 3 8.400 0 12" /></svg>
        <svg className="mr-[10px]" width="16" height="11" viewBox="0 0 16 11"><path d="M4 3.500a4.500 4 0 0 1 8 .5 3.500 3.500 0 0 1 1 7H3.500a3.700 3.700 0 0 1 .5-7.500z" fill="#0f6cbd" /><path d="m1 8.500 7-3 7.500 3.500a3 3 0 0 1-2.500 2H3.500A3.300 3.300 0 0 1 1 8.500z" fill="#28a8ea" /></svg>
        <div className="w-[52px] text-center text-[11px] leading-[18px]">
          <p>2:05 PM</p>
          <p>7/18/2025</p>
        </div>
        <button aria-label="Notifications, 4 new" className="mr-[11px] ml-[18px]">
          <svg width="25" height="25" viewBox="0 0 25 25">
            <path d="M0 1h16v13H8l-3 3v-3H0z" fill="#fff" />
            <path d="M3 4.500h10M3 7.500h10M3 10.500h7" stroke="#1b2b30" />
            <circle cx="16" cy="16.500" r="7.800" fill="#2f3b40" stroke="#8b9295" />
            <text x="16" y="20.500" textAnchor="middle" fontSize="11" fontWeight="bold" fill="#fff" fontFamily="Open Sans">4</text>
          </svg>
        </button>
        <span className="mr-1 h-[40px] w-px bg-[#65757a]" />
      </div>
    </footer>
  );
}

export default function App() {
  return (
    <div className="flex min-h-screen flex-col bg-[#f2f2f2] font-['Noto_Sans',sans-serif]">
      <TopBar />
      <div className="flex flex-1">
        <SideRail />
        <EventsPage />
        <RightPanel />
      </div>
      <div className="flex h-[24px] shrink-0 items-center gap-[8px] pl-[12px] text-[13px] text-black">
        <span>July 18<span className="text-[10px] align-[3px]">th</span> 2025</span>
        <span>|</span>
        <span>2:05 pm</span>
        <span>|</span>
        <span>FLMONROEPRODNAV</span>
        <span>|</span>
        <span>kaylee.fernandez</span>
      </div>
      <Taskbar />
    </div>
  );
}
